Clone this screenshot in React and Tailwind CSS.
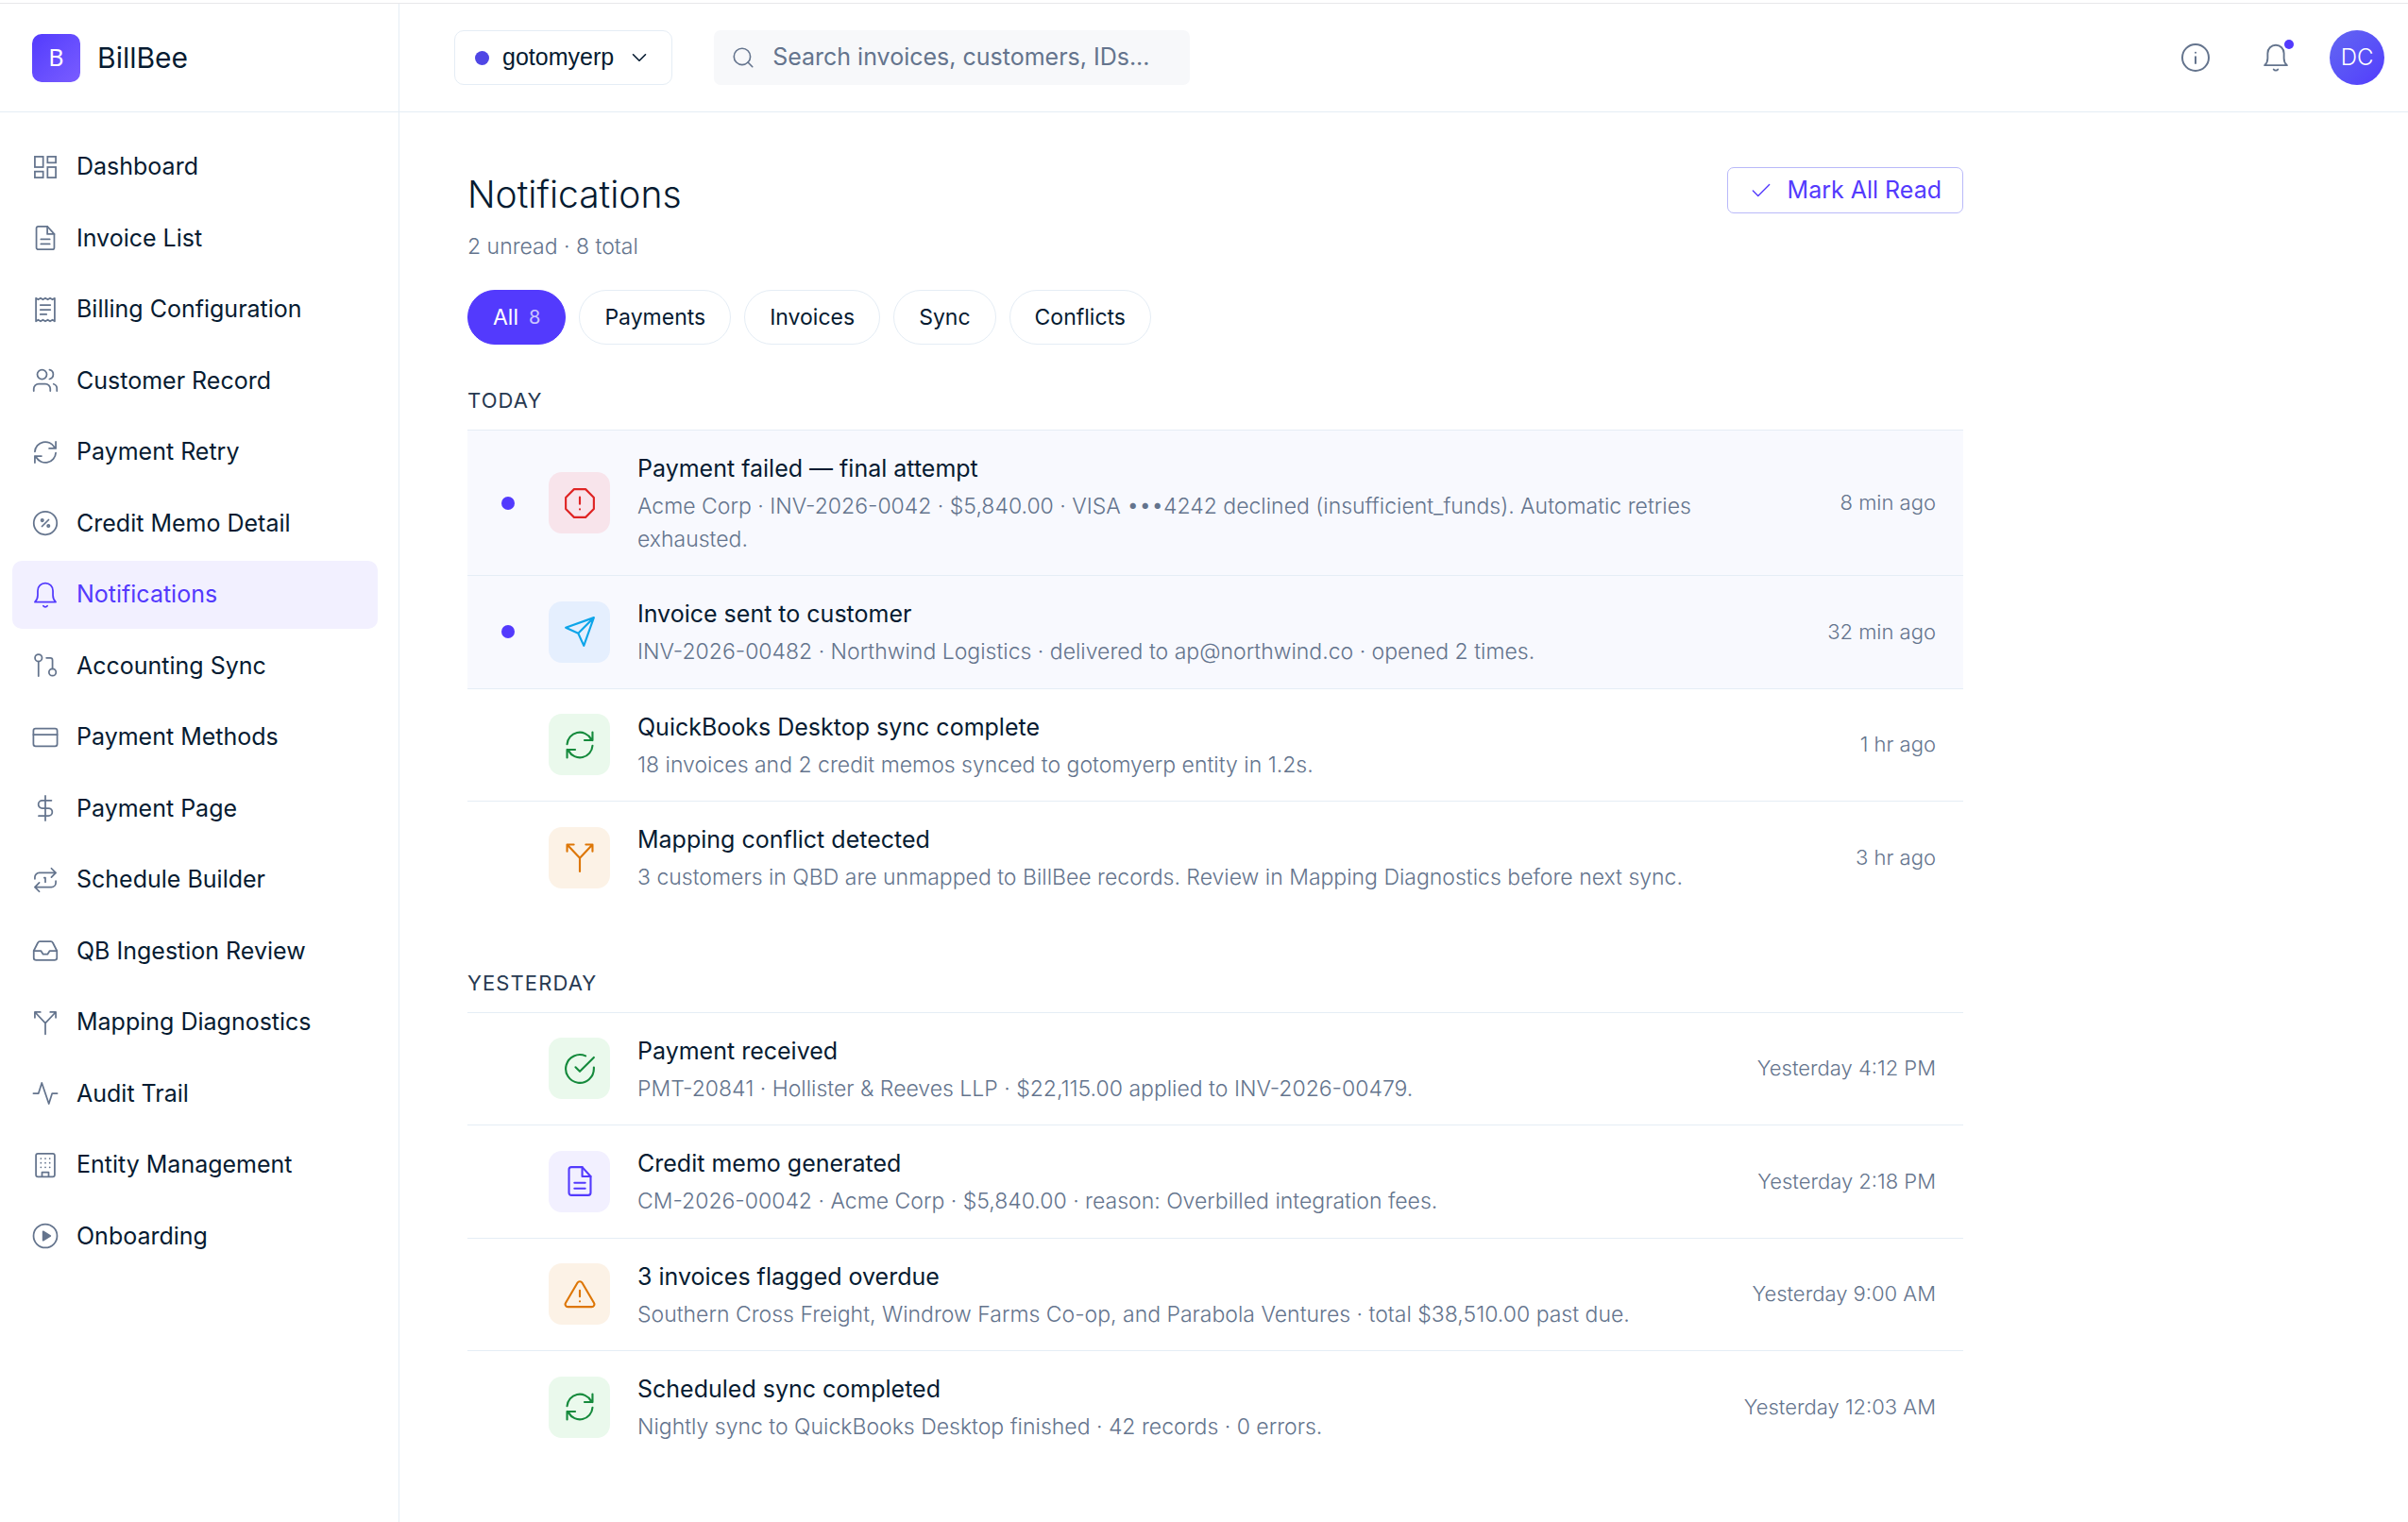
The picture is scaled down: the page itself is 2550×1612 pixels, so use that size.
import { Check, ChevronDown, Search } from "lucide-react";

const icon = (node) =>
  function Icon({ size = 28, strokeWidth = 1.5, className = "" }) {
    return (
      <svg width={size} height={size} viewBox="0 0 24 24" fill="none" stroke="currentColor"
        strokeWidth={strokeWidth} strokeLinecap="round" strokeLinejoin="round" className={className} aria-hidden="true">
        {node}
      </svg>
    );
  };

const GridIcon = icon(
  <g strokeLinejoin="miter">
    <rect x="2.500" y="2.500" width="7.500" height="9.500" /><rect x="14" y="2.500" width="7.500" height="5.500" />
    <rect x="14" y="12" width="7.500" height="9.500" /><rect x="2.500" y="16" width="7.500" height="5.500" />
  </g>
);
const FileIcon = icon(
  <>
    <path d="M13.800 1.500H5.700a1.800 1.800 0 0 0-1.800 1.800v17.400a1.800 1.800 0 0 0 1.800 1.800h12.600a1.800 1.800 0 0 0 1.800-1.800V8.500z" />
    <path d="M13.800 1.500v7h6.300M8 13.200h8M8 17.500h8" />
  </>
);
const ReceiptIcon = icon(
  <>
    <path d="M3.500 1.500v21l2-1.300 2.200 1.300 2.100-1.300 2.200 1.300 2.200-1.300 2.100 1.300 2.200-1.300 2 1.300v-21l-2 1.300-2.200-1.300-2.100 1.300L12 1.500 9.800 2.800 7.700 1.500 5.500 2.800z" />
    <path d="M7.500 7.800h9M7.500 12h9M7.500 16.200h5.500" />
  </>
);
const UsersIcon = icon(
  <>
    <path d="M1.500 21.500V19.500A4.500 4.500 0 0 1 6 15h6a4.500 4.500 0 0 1 4.500 4.500v2M19.500 15.200a4.300 4.300 0 0 1 3 4.300v2" />
    <circle cx="9" cy="6.500" r="4.300" /><path d="M15.800 2.300a4.300 4.300 0 0 1 0 8.400" />
  </>
);
const SyncIcon = icon(
  <>
    <path d="M2.500 11.500A9.500 9.500 0 0 1 20.300 7.500l1.200 1M21.500 2.500v6h-6" />
    <path d="M21.500 12.500A9.500 9.500 0 0 1 3.700 16.500l-1.200-1M2.500 21.500v-6h6" />
  </>
);
const PercentIcon = icon(
  <>
    <circle cx="12" cy="12" r="10.500" /><path d="m15 9-6 6" />
    <circle cx="9.200" cy="9.500" r="1" /><circle cx="14.800" cy="14.500" r="1" />
  </>
);
const BellIcon = icon(
  <>
    <path d="M2.500 18.500h19c-1.800-1.600-2.600-3.200-2.600-6V8.300a6.900 6.900 0 0 0-13.800 0v4.200c0 2.800-.8 4.400-2.600 6z" />
    <path d="M10.200 22a2.200 2.200 0 0 0 3.600 0" />
  </>
);
const BranchIcon = icon(
  <>
    <circle cx="5.800" cy="5" r="3.200" /><path d="M5.800 8.200V21.500" />
    <circle cx="18.500" cy="18" r="3.200" /><path d="M18.500 14.800V7a2 2 0 0 0-2-2H13" />
  </>
);
const CardIcon = icon(<><rect x="1.200" y="4" width="21.600" height="16" rx="2" /><path d="M1.200 9.500h21.600" /></>);
const DollarIcon = icon(<path d="M12 .8v22.400M17.500 5H9.200a3.500 3.500 0 0 0 0 7h5.600a3.500 3.500 0 0 1 0 7H6" />);
const RepeatIcon = icon(
  <>
    <path d="m17.500 1.500 4 4-4 4M2.500 11V9.500a4 4 0 0 1 4-4h15M6.500 22.500l-4-4 4-4M21.500 13v1.500a4 4 0 0 1-4 4h-15" />
    <path d="M11 10h1v4" />
  </>
);
const InboxIcon = icon(
  <>
    <path d="M22.500 12H16l-2 3.200h-4L8 12H1.500" />
    <path d="M5.200 4.700 1.500 12v6.500a2 2 0 0 0 2 2h17a2 2 0 0 0 2-2V12l-3.700-7.300A2 2 0 0 0 17 3.500H7a2 2 0 0 0-1.800 1.200z" />
  </>
);
const SplitIcon = icon(<path d="M16.500 2.500h5v5M7.500 2.500h-5v5M12 22.500v-10l-9-9.500M21 3l-9 9.500" />);
const PulseIcon = icon(<path d="M22.800 12h-4.600L15.200 21.500 8.800 2.500 5.800 12H1.200" />);
const BuildingIcon = icon(
  <>
    <rect x="3.500" y="1.500" width="17" height="21" rx="1.800" /><path d="M9 22v-3.500h6V22" />
    <path d="M8 6h.01M12 6h.01M16 6h.01M8 10h.01M12 10h.01M16 10h.01M8 14h.01M12 14h.01M16 14h.01" />
  </>
);
const PlayIcon = icon(<><circle cx="12" cy="12" r="10.700" /><path d="m10 8 6.500 4-6.500 4z" fill="currentColor" /></>);
const OctagonIcon = icon(<><path d="M7.700 1.500h8.600l6.200 6.200v8.600l-6.200 6.200H7.700l-6.200-6.200V7.700z" /><path d="M12 7.500v5M12 16.500h.01" /></>);
const SendIcon = icon(<path d="M22.500 1.500 10.800 13.200M22.500 1.500 15 22.500l-4.200-9.300L1.500 9z" />);
const CheckCircleIcon = icon(<><path d="M22.500 11v1A10.500 10.500 0 1 1 16.300 2.400" /><path d="M22.500 3.500 12 14l-3.200-3.200" /></>);
const WarningIcon = icon(
  <>
    <path d="M10.300 3.200 1.400 18.300A2 2 0 0 0 3.100 21.300h17.800a2 2 0 0 0 1.700-3L13.700 3.200a2 2 0 0 0-3.400 0z" />
    <path d="M12 9v4.500M12 17.200h.01" />
  </>
);
const InfoIcon = icon(<><circle cx="12" cy="12" r="10.500" /><path d="M12 16.500v-5M12 8h.01" /></>);

const nav = [
  ["Dashboard", GridIcon], ["Invoice List", FileIcon], ["Billing Configuration", ReceiptIcon],
  ["Customer Record", UsersIcon], ["Payment Retry", SyncIcon], ["Credit Memo Detail", PercentIcon],
  ["Notifications", BellIcon], ["Accounting Sync", BranchIcon], ["Payment Methods", CardIcon],
  ["Payment Page", DollarIcon], ["Schedule Builder", RepeatIcon], ["QB Ingestion Review", InboxIcon],
  ["Mapping Diagnostics", SplitIcon], ["Audit Trail", PulseIcon], ["Entity Management", BuildingIcon],
  ["Onboarding", PlayIcon],
];

const groups = [
  {
    title: "Today",
    items: [
      { title: "Payment failed — final attempt", text: "Acme Corp · INV-2026-0042 · $5,840.00 · VISA •••4242 declined (insufficient_funds). Automatic retries exhausted.", time: "8 min ago", Icon: OctagonIcon, tone: "bg-[#f8e4eb] text-[#df2424]", unread: true },
      { title: "Invoice sent to customer", text: "INV-2026-00482 · Northwind Logistics · delivered to ap@northwind.co · opened 2 times.", time: "32 min ago", Icon: SendIcon, tone: "bg-[#e5effe] text-[#0ea5e9]", unread: true },
      { title: "QuickBooks Desktop sync complete", text: "18 invoices and 2 credit memos synced to gotomyerp entity in 1.2s.", time: "1 hr ago", Icon: SyncIcon, tone: "bg-[#eaf9ec] text-[#158a3c]" },
      { title: "Mapping conflict detected", text: "3 customers in QBD are unmapped to BillBee records. Review in Mapping Diagnostics before next sync.", time: "3 hr ago", Icon: SplitIcon, tone: "bg-[#fcf2e6] text-[#dd7606]" },
    ],
  },
  {
    title: "Yesterday",
    items: [
      { title: "Payment received", text: "PMT-20841 · Hollister & Reeves LLP · $22,115.00 applied to INV-2026-00479.", time: "Yesterday 4:12 PM", Icon: CheckCircleIcon, tone: "bg-[#eaf9ec] text-[#158a3c]" },
      { title: "Credit memo generated", text: "CM-2026-00042 · Acme Corp · $5,840.00 · reason: Overbilled integration fees.", time: "Yesterday 2:18 PM", Icon: FileIcon, tone: "bg-[#f2f0ff] text-[#533afd]" },
      { title: "3 invoices flagged overdue", text: "Southern Cross Freight, Windrow Farms Co-op, and Parabola Ventures · total $38,510.00 past due.", time: "Yesterday 9:00 AM", Icon: WarningIcon, tone: "bg-[#fcf2e6] text-[#dd7606]" },
      { title: "Scheduled sync completed", text: "Nightly sync to QuickBooks Desktop finished · 42 records · 0 errors.", time: "Yesterday 12:03 AM", Icon: SyncIcon, tone: "bg-[#eaf9ec] text-[#158a3c]" },
    ],
  },
];

const filters = [["All", 8], ["Payments"], ["Invoices"], ["Sync"], ["Conflicts"]];

function Sidebar() {
  return (
    <aside className="w-[423px] shrink-0 border-r border-[#e5edf5]">
      <div className="flex h-[115px] items-center gap-[18px] border-b border-[#e5edf5] px-[34px]">
        <div className="flex size-[51px] items-center justify-center rounded-[10px] bg-linear-135 from-[#533afd] to-[#7a5cff] font-['Noto_Sans',sans-serif] text-[25px] text-white">B</div>
        <span className="text-[30px]">BillBee</span>
      </div>
      <nav className="flex flex-col gap-1 pt-[22px] pr-[22px] pl-[13px]" aria-label="Main">
        {nav.map(([label, Icon]) => (
          <a key={label} href="#" aria-current={label === "Notifications" ? "page" : undefined}
            className={`flex items-center gap-[19px] rounded-[10px] px-[21px] py-[17px] text-[25px] leading-normal ${label === "Notifications" ? "bg-[#f2f0ff] text-[#533afd]" : ""}`}>
            <Icon className={label === "Notifications" ? "" : "text-[#64748d]"} />
            {label}
          </a>
        ))}
      </nav>
    </aside>
  );
}

function Header() {
  return (
    <header className="flex h-[115px] items-center border-b border-[#e5edf5] pr-[25px] pl-[58px]">
      <button type="button" className="flex h-[58px] items-center gap-[14px] rounded-[10px] border border-[#e5edf5] px-[21px] font-['Liberation_Sans',Arial,sans-serif] text-[25px]">
        <span className="size-[15px] rounded-full bg-[#4f46e5]" />
        gotomyerp
        <ChevronDown size={26} strokeWidth={1.5} />
      </button>
      <label className="ml-11 flex h-[58px] w-[504px] items-center gap-[18px] rounded-[7px] bg-[#f7f8fa] px-[18px] text-[#64748d]">
        <Search size={26} strokeWidth={1.5} />
        <input type="search" aria-label="Search" placeholder="Search invoices, customers, IDs..."
          className="min-w-0 flex-1 bg-transparent text-[25px] outline-none placeholder:text-[#64748d]" />
      </label>
      <div className="ml-auto flex items-center gap-[42px] text-[#64748d]">
        <button type="button" aria-label="Help" className="mr-3"><InfoIcon size={32} /></button>
        <button type="button" aria-label="Notifications" className="relative">
          <BellIcon size={30} />
          <span className="absolute -top-1 -right-1 size-[10px] rounded-full bg-[#533afd]" />
        </button>
        <button type="button" aria-label="Account" className="flex size-[58px] items-center justify-center rounded-full bg-linear-135 from-[#6366f1] to-[#533afd] text-[24px] font-light text-white">DC</button>
      </div>
    </header>
  );
}

function Item({ title, text, time, Icon, tone, unread }) {
  return (
    <li className={`flex items-center border-t border-[#e5edf5] py-[21px] pr-[29px] pl-[36px] ${unread ? "bg-[#f8f9fe]" : ""}`}>
      <span className={`size-[14px] shrink-0 rounded-full ${unread ? "bg-[#533afd]" : ""}`} />
      <span className={`mr-[29px] ml-[36px] flex size-[65px] shrink-0 items-center justify-center rounded-[14px] ${tone}`}>
        <Icon size={34} />
      </span>
      <div className="min-w-0 flex-1">
        <h3 className="text-[25px] leading-[38px]">{title}</h3>
        <p className="mt-1 max-w-[1180px] text-[23px] leading-normal font-light text-[#64748d]">{text}</p>
      </div>
      <time className="ml-10 shrink-0 text-[22px] font-light text-[#64748d]">{time}</time>
    </li>
  );
}

export default function App() {
  return (
    <div className="min-h-screen bg-white pt-[3px] font-['Inter',sans-serif] text-[#061b31]">
      <div className="flex min-h-[calc(100vh-3px)] border-t border-[#e8e8ea]">
        <Sidebar />
        <div className="min-w-0 flex-1">
          <Header />
          <main className="max-w-[1728px] px-[72px] pt-[58px] pb-[58px]">
            <div className="flex items-start justify-between">
              <div>
                <h1 className="text-[39px] leading-[58px] font-light">Notifications</h1>
                <p className="mt-[9px] text-[23px] leading-[34px] font-light text-[#64748d]">2 unread · 8 total</p>
              </div>
              <button type="button" className="flex h-[49px] items-center gap-[15px] rounded-[7px] border border-[#b9b9f9] px-[22px] text-[25px] text-[#533afd]">
                <Check size={26} strokeWidth={1.25} />
                Mark All Read
              </button>
            </div>
            <div className="mt-[29px] flex gap-[14px]">
              {filters.map(([label, count]) => (
                <button key={label} type="button"
                  className={`flex h-[58px] items-center gap-[11px] rounded-full border px-[26px] text-[23px] ${count ? "border-[#533afd] bg-[#533afd] text-white" : "border-[#e5edf5]"}`}>
                  {label}
                  {count && <span className="text-[20px] opacity-70">{count}</span>}
                </button>
              ))}
            </div>
            {groups.map((group, i) => (
              <section key={group.title} className={i ? "mt-[56px]" : "mt-[42px]"}>
                <h2 className="mb-[14px] text-[22px] leading-[34px] tracking-wider text-[#273951] uppercase">{group.title}</h2>
                <ul>{group.items.map((item) => <Item key={item.title} {...item} />)}</ul>
              </section>
            ))}
          </main>
        </div>
      </div>
    </div>
  );
}
